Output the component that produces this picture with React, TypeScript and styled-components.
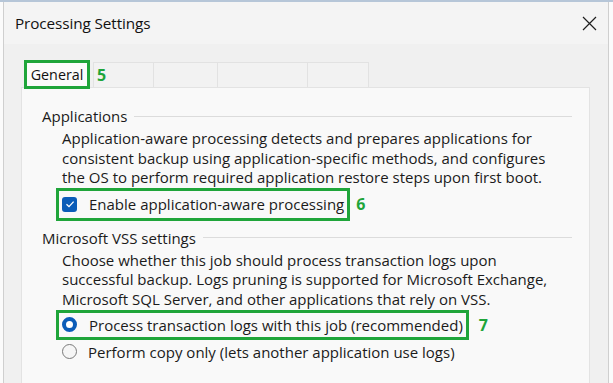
import styled, { createGlobalStyle } from "styled-components";

const GlobalStyle = createGlobalStyle`
  html, body {
    margin: 0;
    padding: 0;
    background: #ffffff;
  }
  body {
    font-family: "Open Sans", "Noto Sans", "Liberation Sans", sans-serif;
    color: #1b1b1b;
  }
`;

const GREEN = "#1fa53a";
const ACCENT = "#0b5cb8";

const Screen = styled.div`
  width: 613px;
  height: 383px;
  overflow: hidden;
  display: flex;
  border-top: 2px solid #b6c6d8;
  box-sizing: border-box;
`;

const BackStrip = styled.div<{ $w: number }>`
  width: ${(p) => p.$w}px;
  flex: none;
  background: #fbfbfb;
`;

const Dialog = styled.div`
  flex: 1;
  display: flex;
  flex-direction: column;
  background: #f0f0f0;
  border-left: 1px solid #cfcfcf;
  border-right: 1px solid #cfcfcf;
`;

const TitleBar = styled.div`
  height: 42px;
  flex: none;
  display: flex;
  align-items: center;
  justify-content: space-between;
  padding: 0 11px 0 11px;
  background: #f4f4f4;
`;

const Title = styled.span`
  font-size: 15.3px;
  color: #111;
  letter-spacing: -0.1px;
`;

const CloseButton = styled.button`
  border: 0;
  background: transparent;
  padding: 0;
  width: 16px;
  height: 16px;
  display: flex;
  align-items: center;
  justify-content: center;
`;

const Body = styled.div`
  flex: 1;
  display: flex;
  flex-direction: column;
  padding: 16px 18px 0 17px;
`;

const TabStrip = styled.div`
  height: 27px;
  display: flex;
  align-items: flex-start;
`;

const ActiveTab = styled.div`
  position: relative;
  z-index: 1;
  margin-left: 3px;
  width: 60px;
  height: 23px;
  border: 3px solid ${GREEN};
  background: #fbfbfb;
  display: flex;
  align-items: center;
  justify-content: center;
  font-size: 14.3px;
  color: #111;
`;

const Tab = styled.div<{ $w: number }>`
  width: ${(p) => p.$w}px;
  height: 25px;
  margin-top: 2px;
  box-sizing: border-box;
  border: 1px solid #e2e2e2;
  border-bottom: 0;
  border-left-width: 0;
  background: #f2f2f2;
`;

const FirstTab = styled(Tab)`
  margin-left: 3px;
  border-left-width: 1px;
`;

const Badge = styled.span`
  color: ${GREEN};
  font-weight: 700;
  font-size: 16px;
  line-height: 20px;
`;

const TabBadge = styled(Badge)`
  position: absolute;
  left: 70px;
  top: 2px;
`;

const Panel = styled.div`
  flex: 1;
  background: #f9f9f9;
  border: 1px solid #e3e3e3;
  border-bottom: 0;
  padding: 18px 17px 0 20px;
`;

const GroupHeader = styled.div<{ $gap: number }>`
  display: flex;
  align-items: center;
  margin-top: ${(p) => p.$gap}px;
  font-size: 15px;
  line-height: 20px;
  &::after {
    content: "";
    flex: 1;
    height: 1px;
    margin-left: 7px;
    background: #dcdcdc;
  }
`;

const Description = styled.p`
  margin: 3px 0 0 20px;
  font-size: 15px;
  line-height: 19.6px;
  white-space: nowrap;
`;

const CalloutRow = styled.div`
  display: flex;
  align-items: center;
  margin-left: 14px;
`;

const CalloutBox = styled.label<{ $h: number }>`
  display: flex;
  align-items: center;
  gap: 12px;
  height: ${(p) => p.$h}px;
  padding: 0 3px 0 3px;
  border: 3px solid ${GREEN};
  font-size: 15px;
`;

const CalloutBadge = styled(Badge)<{ $gap: number }>`
  margin-left: ${(p) => p.$gap}px;
`;

const OptionRow = styled.label`
  display: flex;
  align-items: center;
  gap: 11px;
  height: 20px;
  margin: 2px 0 0 20px;
  font-size: 15px;
`;

const CheckBox = styled.span`
  width: 15px;
  height: 15px;
  border-radius: 3px;
  background: ${ACCENT};
  display: flex;
  align-items: center;
  justify-content: center;
  flex: none;
`;

const Radio = styled.span<{ $on?: boolean }>`
  width: 15px;
  height: 15px;
  box-sizing: border-box;
  border-radius: 50%;
  flex: none;
  background: ${(p) => (p.$on ? "#ffffff" : "#f6f6f6")};
  border: ${(p) => (p.$on ? `4px solid ${ACCENT}` : "1px solid #7a7a7a")};
`;

export default function App() {
  return (
    <>
      <GlobalStyle />
      <Screen>
        <BackStrip $w={3} />
        <Dialog>
          <TitleBar>
            <Title>Processing Settings</Title>
            <CloseButton aria-label="Close">
              <svg width="15" height="15" viewBox="0 0 15 15">
                <path d="M1 1 L14 14 M14 1 L1 14" stroke="#1f1f1f" strokeWidth="1.2" />
              </svg>
            </CloseButton>
          </TitleBar>
          <Body>
            <TabStrip>
              <ActiveTab>
                General
                <TabBadge>5</TabBadge>
              </ActiveTab>
              <FirstTab $w={61} />
              <Tab $w={64} />
              <Tab $w={90} />
              <Tab $w={61} />
            </TabStrip>
            <Panel>
              <GroupHeader $gap={0}>Applications</GroupHeader>
              <Description>
                Application-aware processing detects and prepares applications for
                <br />
                consistent backup using application-specific methods, and configures
                <br />
                the OS to perform required application restore steps upon first boot.
              </Description>
              <CalloutRow>
                <CalloutBox $h={27}>
                  <CheckBox>
                    <svg width="10" height="10" viewBox="0 0 10 10">
                      <path d="M1.5 5.2 L4 7.6 L8.6 2.6" fill="none" stroke="#fff" strokeWidth="1.3" />
                    </svg>
                  </CheckBox>
                  Enable application-aware processing
                </CalloutBox>
                <CalloutBadge $gap={6}>6</CalloutBadge>
              </CalloutRow>
              <GroupHeader $gap={7}>Microsoft VSS settings</GroupHeader>
              <Description>
                Choose whether this job should process transaction logs upon
                <br />
                successful backup. Logs pruning is supported for Microsoft Exchange,
                <br />
                Microsoft SQL Server, and other applications that rely on VSS.
              </Description>
              <CalloutRow>
                <CalloutBox $h={24}>
                  <Radio $on />
                  Process transaction logs with this job (recommended)
                </CalloutBox>
                <CalloutBadge $gap={10}>7</CalloutBadge>
              </CalloutRow>
              <OptionRow>
                <Radio />
                Perform copy only (lets another application use logs)
              </OptionRow>
            </Panel>
          </Body>
        </Dialog>
        <BackStrip $w={4} />
      </Screen>
    </>
  );
}
